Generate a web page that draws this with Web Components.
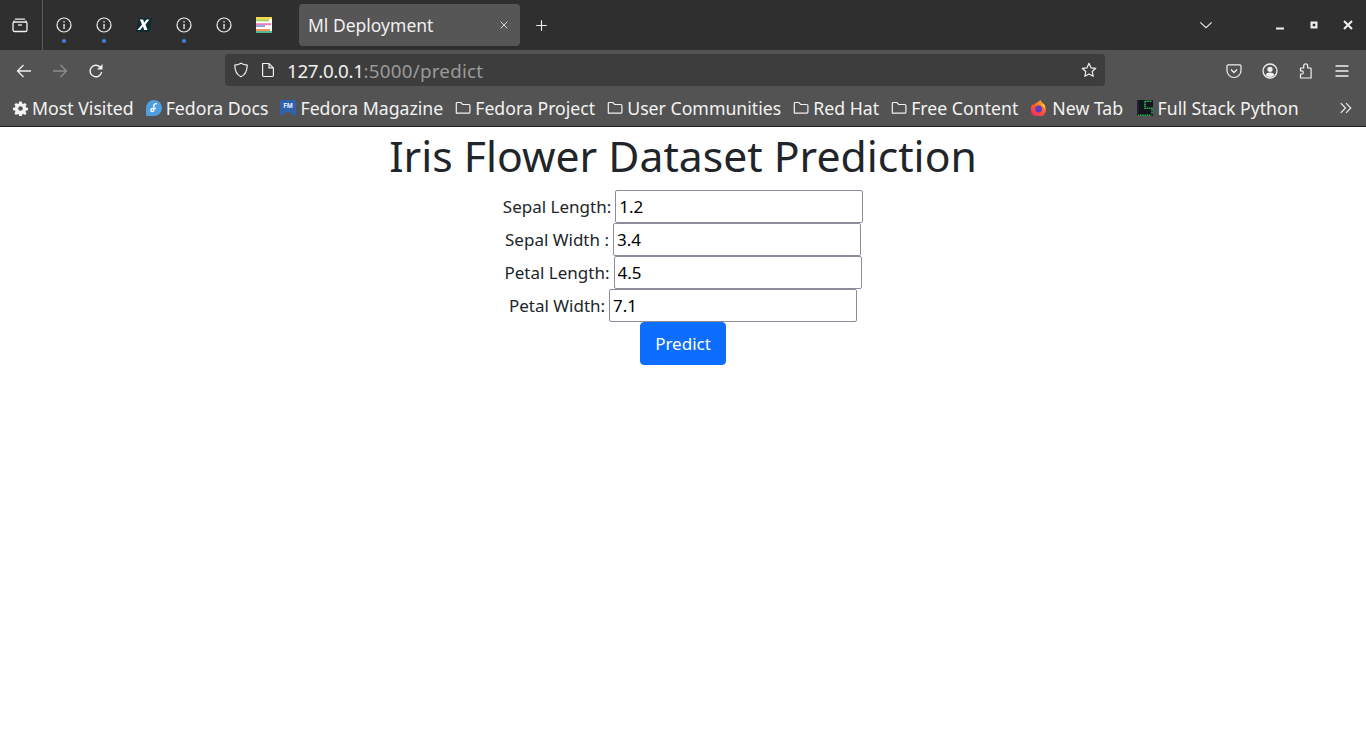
<!DOCTYPE html>
<html lang="en">
<head>
<meta charset="utf-8">
<title>Ml Deployment</title>
<style>
  html, body { margin: 0; height: 100%; background: #fff; }
  body { font-family: "Noto Sans", sans-serif; display: flex; flex-direction: column; }
</style>
</head>
<body>
<tab-strip></tab-strip>
<nav-bar></nav-bar>
<bookmark-bar>
  <bookmark-item icon="gear" size="15">Most Visited</bookmark-item>
  <bookmark-item icon="fedora">Fedora Docs</bookmark-item>
  <bookmark-item icon="fm">Fedora Magazine</bookmark-item>
  <bookmark-item icon="folder">Fedora Project</bookmark-item>
  <bookmark-item icon="folder">User Communities</bookmark-item>
  <bookmark-item icon="folder">Red Hat</bookmark-item>
  <bookmark-item icon="folder">Free Content</bookmark-item>
  <bookmark-item icon="firefox" style="margin-left:1px;--gap:5px">New Tab</bookmark-item>
  <bookmark-item icon="fsp" style="margin-left:1.5px;--gap:5px">Full Stack Python</bookmark-item>
</bookmark-bar>
<predict-page>
  <predict-field label="Sepal Length:" value="1.2"></predict-field>
  <predict-field label="Sepal Width :" value="3.4"></predict-field>
  <predict-field label="Petal Length:" value="4.5"></predict-field>
  <predict-field label="Petal Width:" value="7.1"></predict-field>
</predict-page>

<script>
// all icons live here, drawn on a 16x16 box
const ICONS = {
  archive: '<g fill="none" stroke="currentColor" stroke-width="1.3"><rect x="1" y="5" width="14" height="9.5" rx="1.6"/><path d="M3 2.200h10M2 5V3.600M14 5V3.600"/><path d="M6 8h4"/></g>',
  info: '<circle cx="8" cy="8" r="7" fill="none" stroke="currentColor" stroke-width="1.2"/><rect x="7.400" y="7" width="1.300" height="5" fill="currentColor"/><rect x="7.400" y="4" width="1.300" height="1.500" fill="currentColor"/>',
  x: '<path d="M3 1h13l-3 14H0z" fill="#0c2b33"/><path d="M3.800 2.500h3.300l1.100 3 2.400-3h2.800L9.500 7.500l2 5.500H8.200L7 9.500 4.100 13H1.400l4.600-5.500z" fill="#fff"/>',
  bars: '<rect width="16" height="16" fill="#fff"/><rect width="16" height="2.200" fill="#f7d84a"/><rect y="2.200" width="13" height="2.200" fill="#a8d65a"/><rect y="6.200" width="15" height="2" fill="#e57fc0"/><rect y="8.200" width="9" height="1.800" fill="#8f9ae0"/><rect y="12" width="14" height="2.200" fill="#f29468"/><rect y="14" width="16" height="2" fill="#56b88c"/>',
  close: '<path d="M3.500 3.500l9 9M12.500 3.500l-9 9" fill="none" stroke="currentColor" stroke-width="1.100"/>',
  plus: '<path d="M8 1.500v13M1.500 8h13" fill="none" stroke="currentColor" stroke-width="1.400"/>',
  chevron: '<path d="M1.500 5l6.500 6 6.500-6" fill="none" stroke="currentColor" stroke-width="1.300"/>',
  min: '<rect x="4" y="10.500" width="8" height="2" fill="currentColor"/>',
  max: '<path fill-rule="evenodd" d="M4.500 4.500h7v7h-7zM6.700 6.700v2.600h2.600V6.700z" fill="currentColor"/>',
  winclose: '<path d="M4 4l8 8M12 4l-8 8" fill="none" stroke="currentColor" stroke-width="2"/>',
  back: '<path d="M15 8H1.500M7.500 2L1.500 8l6 6" fill="none" stroke="currentColor" stroke-width="1.300"/>',
  forward: '<path d="M1 8h13.500M8.500 2l6 6-6 6" fill="none" stroke="currentColor" stroke-width="1.300"/>',
  reload: '<path d="M13.600 9a5.800 5.800 0 1 1-1.600-5.100" fill="none" stroke="currentColor" stroke-width="1.400"/><path d="M14.500 1v5.500H9z" fill="currentColor"/>',
  shield: '<path d="M8 1.200c2 1.200 4 1.700 6.200 1.900 0 6-1.600 9.700-6.200 11.700C3.400 12.800 1.800 9.100 1.800 3.100 4 2.900 6 2.400 8 1.200z" fill="none" stroke="currentColor" stroke-width="1.200"/>',
  page: '<path d="M2.600 1.500h6.400l4.400 4.400v7.500a1.100 1.100 0 0 1-1.100 1.100H3.700a1.100 1.100 0 0 1-1.100-1.100zM9 1.500v4.400h4.400" fill="none" stroke="currentColor" stroke-width="1.200"/>',
  star: '<path d="M8 1.300l2 4.500 4.800.5-3.600 3.200 1 4.800L8 11.900l-4.200 2.400 1-4.800L1.200 6.300 6 5.800z" fill="none" stroke="currentColor" stroke-width="1.200" stroke-linejoin="round"/>',
  pocket: '<path d="M2.300 1.800h11.400a1.300 1.300 0 0 1 1.300 1.300v4.400a7 7 0 0 1-14 0V3.100a1.300 1.300 0 0 1 1.300-1.300z" fill="none" stroke="currentColor" stroke-width="1.200"/><path d="M5 6.500l3 3 3-3" fill="none" stroke="currentColor" stroke-width="1.300"/>',
  account: '<circle cx="8" cy="8" r="7" fill="none" stroke="currentColor" stroke-width="1.300"/><circle cx="8" cy="6.300" r="2.600" fill="currentColor"/><path d="M3.500 12c1-1.800 2.600-2.500 4.500-2.500s3.500.7 4.500 2.500A6 6 0 0 1 8 14a6 6 0 0 1-4.500-2z" fill="currentColor"/>',
  puzzle: '<path d="M2.500 15v-4h1.200a1.600 1.600 0 0 0 0-3.200H2.500V5h3.200V2.900a2 2 0 0 1 4 0V5h2.600a.8.800 0 0 1 .8.800V15z" fill="none" stroke="currentColor" stroke-width="1.200" stroke-linejoin="round"/>',
  menu: '<path d="M1.500 3h13M1.500 8h13M1.500 13h13" fill="none" stroke="currentColor" stroke-width="1.300"/>',
  more: '<path d="M2 2.500L7.500 8 2 13.500M8 2.500L13.500 8 8 13.500" fill="none" stroke="currentColor" stroke-width="1.300"/>',
  gear: '<path fill="currentColor" fill-rule="evenodd" d="M6.700 1h2.600l.4 2 1.300.6 1.700-1.100 1.800 1.800-1.100 1.700.6 1.300 2 .4v2.600l-2 .4-.6 1.300 1.100 1.700-1.800 1.800-1.700-1.100-1.300.6-.4 2H6.700l-.4-2-1.300-.6-1.700 1.100-1.800-1.800 1.100-1.700-.6-1.300-2-.4V7.700l2-.4.6-1.300-1.100-1.700 1.800-1.800L5 3.600l1.300-.6zM8 6a2.500 2.500 0 1 0 0 5 2.500 2.500 0 0 0 0-5z" transform="translate(0 -.5)"/>',
  fedora: '<path d="M8 0a8 8 0 0 1 0 16H1a1 1 0 0 1-1-1V8a8 8 0 0 1 8-8z" fill="#4f9fdd"/><path d="M11 3.800C9.200 3 7.800 4.200 7.800 6v4.200c0 1.900-3 2-3 .1 0-1.200 1.200-1.800 2.600-1.800h2.500" fill="none" stroke="#fff" stroke-width="1.300"/>',
  fm: '<path d="M0 0h16v16l-8-4.500L0 16z" fill="#2f62ad"/><text x="8" y="7.500" font-family="Noto Sans" font-size="6.500" font-weight="700" text-anchor="middle" fill="#eaf2ff">FM</text>',
  folder: '<path d="M1.300 13V3.500a1 1 0 0 1 1-1h3.600l1.800 2h6a1.200 1.200 0 0 1 1.200 1.200V12a1.200 1.200 0 0 1-1.200 1.200H2.500A1.200 1.200 0 0 1 1.300 13z" fill="none" stroke="currentColor" stroke-width="1.200"/>',
  firefox: '<defs><linearGradient id="ff" x1="0.800" y1="0" x2="0.200" y2="1"><stop offset="0" stop-color="#ffb81e"/><stop offset=".5" stop-color="#ff5a2c"/><stop offset="1" stop-color="#e8256c"/></linearGradient></defs><path d="M9.500 0c.4 1.700 2 2.600 3.300 3.900A7.700 7.700 0 1 1 1.600 4.200c.4.300.7.600 1 1.300C3.500 3 6.500 3 9.500 0z" fill="url(#ff)"/><path d="M13 4.200c1 1.300 1.300 3 .8 4.700-.9-2.200-2.400-3.500-4.300-4.100z" fill="#ffd53d"/><circle cx="7.600" cy="9" r="3.400" fill="#5b3bc4"/>',
  fsp: '<rect width="16" height="16" fill="#14161f"/><path d="M8 1.200h7M8 1.200v7h7v6M.8 15.200h13.500" fill="none" stroke="#2eb84a" stroke-width="1.600" stroke-dasharray="1.500 .7"/><path d="M1 1v12" fill="none" stroke="#2a2f42" stroke-width="1.500" stroke-dasharray="1.500 .7"/>'
};

class UiIcon extends HTMLElement {
  constructor() {
    super();
    this.attachShadow({ mode: 'open' });
  }

  connectedCallback() {
    const size = this.getAttribute('size') || 16;
    this.shadowRoot.innerHTML = `
      <style>
        :host { display: inline-flex; flex: none; width: ${size}px; height: ${size}px; }
        svg { display: block; width: 100%; height: 100%; }
      </style>
      <svg viewBox="0 0 16 16">${ICONS[this.getAttribute('name')]}</svg>
    `;
  }
}

class TabStrip extends HTMLElement {
  constructor() {
    super();
    this.attachShadow({ mode: 'open' });
    const pins = [['info', 1], ['info', 1], ['x', 0], ['info', 1], ['info', 0], ['bars', 0]];
    this.shadowRoot.innerHTML = `
      <style>
        :host {
          display: flex; flex: none; height: 50px; align-items: center;
          background: #2f2f2f; color: #f0f0f0; font-size: 17.5px;
        }
        .all { width: 40px; padding-right: 2px; height: 100%; display: flex; align-items: center; justify-content: center; border-right: 1px solid #5c5c5c; }
        .pins { display: flex; margin-left: 1px; }
        .pin { width: 40px; height: 50px; display: flex; align-items: center; justify-content: center; position: relative; }
        .dot { position: absolute; left: 18px; top: 39px; width: 4px; height: 4px; border-radius: 50%; background: #3a86e0; }
        .tab {
          margin-left: 15px; width: 221px; height: 42px; box-sizing: border-box; padding: 0 10px 0 9px;
          display: flex; align-items: center; justify-content: space-between;
          background: #565656; border-radius: 4px;
        }
        .plus { margin-left: 15px; }
        .spacer { flex: 1; }
        .win { width: 34px; display: flex; justify-content: center; }
      </style>
      <div class="all"><ui-icon name="archive"></ui-icon></div>
      <div class="pins">
        ${pins.map(([name, dot]) => `<div class="pin"><ui-icon name="${name}"></ui-icon>${dot ? '<span class="dot"></span>' : ''}</div>`).join('')}
      </div>
      <div class="tab"><span>Ml Deployment</span><ui-icon name="close" size="12"></ui-icon></div>
      <ui-icon class="plus" name="plus" size="13"></ui-icon>
      <div class="spacer"></div>
      <ui-icon name="chevron" size="14" style="margin-right:50px"></ui-icon>
      <div class="win"><ui-icon name="min"></ui-icon></div>
      <div class="win"><ui-icon name="max"></ui-icon></div>
      <div class="win" style="margin-right:1px"><ui-icon name="winclose"></ui-icon></div>
    `;
  }
}

class NavBar extends HTMLElement {
  constructor() {
    super();
    this.attachShadow({ mode: 'open' });
    this.shadowRoot.innerHTML = `
      <style>
        :host {
          display: flex; flex: none; height: 40px; align-items: center;
          background: #535353; color: #f0f0f0;
        }
        .btn { width: 36px; display: flex; justify-content: center; padding-top: 2px; }
        .btn.off { color: #8f8f8f; }
        .left { display: flex; margin-left: 6px; }
        .url {
          margin-left: 111px; width: 880px; height: 32px; box-sizing: border-box; padding: 0 8px;
          display: flex; align-items: center; background: #3d3d3d; border-radius: 4px;
          font-size: 18.8px;
        }
        .url .page { margin-left: 11px; }
        .addr { margin-left: 11px; flex: 1; white-space: nowrap; padding-top: 1px; letter-spacing: -.33px; }
        .addr span { color: #9a9a9a; letter-spacing: .23px; }
        .right { display: flex; margin-left: 111px; }
      </style>
      <div class="left">
        <div class="btn"><ui-icon name="back"></ui-icon></div>
        <div class="btn off"><ui-icon name="forward"></ui-icon></div>
        <div class="btn"><ui-icon name="reload"></ui-icon></div>
      </div>
      <div class="url">
        <ui-icon name="shield"></ui-icon>
        <ui-icon class="page" name="page"></ui-icon>
        <div class="addr">127.0.0.1<span>:5000/predict</span></div>
        <ui-icon name="star"></ui-icon>
      </div>
      <div class="right">
        <div class="btn"><ui-icon name="pocket"></ui-icon></div>
        <div class="btn"><ui-icon name="account"></ui-icon></div>
        <div class="btn"><ui-icon name="puzzle"></ui-icon></div>
        <div class="btn"><ui-icon name="menu"></ui-icon></div>
      </div>
    `;
  }
}

class BookmarkBar extends HTMLElement {
  constructor() {
    super();
    this.attachShadow({ mode: 'open' });
    this.shadowRoot.innerHTML = `
      <style>
        :host {
          display: flex; flex: none; height: 36px; align-items: center;
          background: #535353; color: #f2f2f2; padding-left: 13px;
          border-bottom: 1px solid #1e1e1e; font-size: 17.7px;
        }
        .items { display: flex; flex: 1; gap: 12px; }
        .more { margin-right: 13px; }
      </style>
      <div class="items"><slot></slot></div>
      <ui-icon class="more" name="more" size="14"></ui-icon>
    `;
  }
}

class BookmarkItem extends HTMLElement {
  constructor() {
    super();
    this.attachShadow({ mode: 'open' });
    this.shadowRoot.innerHTML = `
      <style>
        :host { display: inline-flex; align-items: center; gap: var(--gap, 4px); white-space: nowrap; }
      </style>
      <ui-icon name="${this.getAttribute('icon')}" size="${this.getAttribute('size') || 16}"></ui-icon>
      <slot></slot>
    `;
  }
}

class PredictField extends HTMLElement {
  constructor() {
    super();
    this.attachShadow({ mode: 'open' });
    this.shadowRoot.innerHTML = `
      <style>
        :host { display: flex; justify-content: center; align-items: center; gap: 4px; height: 33px; }
        label { color: #212529; font-size: 17px; }
        input {
          box-sizing: border-box; width: 248px; height: 33px; padding: 1px 3px; margin: 0;
          font: 17px "Noto Sans", sans-serif; color: #000; background: #fff;
          border: 1px solid #8f8b9b; border-radius: 2px;
        }
      </style>
      <label for="f">${this.getAttribute('label')}</label>
      <input id="f" type="text" value="${this.getAttribute('value')}">
    `;
  }
}

class PredictPage extends HTMLElement {
  constructor() {
    super();
    this.attachShadow({ mode: 'open' });
    this.shadowRoot.innerHTML = `
      <style>
        :host { display: block; flex: 1; background: #fff; text-align: center; padding-top: 5px; }
        h1 { margin: 0 0 10px; font-size: 42.7px; line-height: 48px; font-weight: 400; color: #212529; white-space: nowrap; }
        button {
          display: block; margin: 0 auto; width: 86px; height: 43px; padding: 0;
          font: 17px "Noto Sans", sans-serif; color: #fff;
          background: #0d6efd; border: 1px solid #0d6efd; border-radius: 4px;
        }
      </style>
      <h1>Iris Flower Dataset Prediction</h1>
      <slot></slot>
      <button type="button">Predict</button>
    `;
  }
}

customElements.define('ui-icon', UiIcon);
customElements.define('tab-strip', TabStrip);
customElements.define('nav-bar', NavBar);
customElements.define('bookmark-bar', BookmarkBar);
customElements.define('bookmark-item', BookmarkItem);
customElements.define('predict-field', PredictField);
customElements.define('predict-page', PredictPage);
</script>
</body>
</html>
